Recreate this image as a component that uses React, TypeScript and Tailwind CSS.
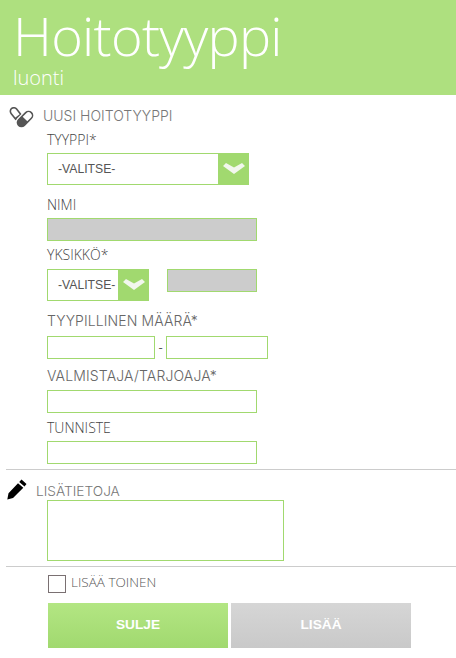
import type { FC, ReactNode } from 'react';

const inputClass = 'block border border-[#a1d96f] h-[23px] bg-white';
const disabledClass = 'block border border-[#a1d96f] h-[23px] bg-[#cccccc]';

const Label: FC<{ children: ReactNode; className?: string }> = ({ children, className = '' }) => (
    <div className={`ml-[47px] h-[20px] text-[14px] leading-[20px] font-light whitespace-nowrap ${className}`}>
        {children}
    </div>
);

const Select: FC<{ width: string }> = ({ width }) => (
    <div className={`flex h-[32px] border border-[#a1d96f] bg-white ${width}`}>
        <span className="flex-1 pl-[10px] text-[12.2px] leading-[30px] text-[#555555] whitespace-nowrap font-['Liberation_Sans',sans-serif]">
            -VALITSE-
        </span>
        <span className="flex w-[31px] shrink-0 -my-px -mr-px items-center justify-center bg-[#a1d96f]">
            <svg width="22" height="12" viewBox="0 0 22 12">
                <path d="M0 3 L3 0 L11 4.5 L19 0 L22 3 L11 11 Z" fill="#f2f7ee" />
            </svg>
        </span>
    </div>
);

const PillsIcon = () => (
    <svg width="26" height="22" viewBox="0 0 26 22" className="ml-[9px] mt-[4px] shrink-0">
        <g transform="rotate(52 7 7)">
            <rect x="0" y="3.5" width="14.5" height="7" rx="3.5" fill="white" stroke="#555555" strokeWidth="1.6" />
            <path d="M9.5 3.5 H11 A3.5 3.5 0 0 1 11 10.5 H9.5 Z" fill="#555555" />
        </g>
        <g transform="rotate(-45 16 12)">
            <rect x="7" y="8" width="18" height="8" rx="4" fill="white" stroke="white" strokeWidth="4" />
            <rect x="7" y="8" width="18" height="8" rx="4" fill="white" stroke="#555555" strokeWidth="1.6" />
            <path d="M16 8 H11 A4 4 0 0 0 11 16 H16 Z" fill="#555555" />
        </g>
    </svg>
);

const PencilIcon = () => (
    <svg width="20" height="21" viewBox="0 0 20 21" className="ml-[7px] shrink-0">
        <path d="M14.5 0.5 L19.5 5 L17.5 7.5 L12.2 3 Z M11 4.2 L16.3 8.8 L6 19 L0.3 20.6 L1.5 14.2 Z" fill="#000000" />
    </svg>
);

const App: FC = () => {
    return (
        <div className="w-[456px] h-[658px] overflow-hidden bg-white font-['Open_Sans',sans-serif]">
            <header className="h-[95px] bg-[#aee07f] pl-[13px] pt-[4px] text-white font-light">
                <h1 className="h-[63px] text-[54px] leading-[62px] tracking-[-0.7px] whitespace-nowrap">Hoitotyyppi</h1>
                <p className="text-[20px] leading-[22px]">luonti</p>
            </header>

            <div className="flex h-[31px] items-center pt-[10px]">
                <PillsIcon />
                <span className="ml-[8px] text-[14px] font-light text-[#777777] whitespace-nowrap font-['Inter',sans-serif]">UUSI HOITOTYYPPI</span>
            </div>

            <Label className="mt-[4px] text-[#444444]">TYYPPI*</Label>
            <div className="ml-[47px] mt-[3px]">
                <Select width="w-[202px]" />
            </div>

            <Label className="mt-[10px] text-[#444444]">NIMI</Label>
            <div className={`${disabledClass} ml-[47px] mt-[3px] w-[210px]`} />

            <Label className="mt-[4px] text-[#444444]">YKSIKKÖ*</Label>
            <div className="ml-[47px] mt-[4px] flex items-start gap-[18px]">
                <Select width="w-[102px]" />
                <div className={`${disabledClass} w-[90px]`} />
            </div>

            <Label className="mt-[10px] text-[#666666] font-['Inter',sans-serif] tracking-[0.1px]">TYYPILLINEN MÄÄRÄ*</Label>
            <div className="ml-[47px] mt-[5px] flex items-center">
                <div className={`${inputClass} w-[108px]`} />
                <span className="w-[11px] text-center text-[13px] text-[#555555]">-</span>
                <div className={`${inputClass} w-[102px]`} />
            </div>

            <Label className="mt-[7px] text-[#666666] font-['Inter',sans-serif] tracking-[0.15px]">VALMISTAJA/TARJOAJA*</Label>
            <div className={`${inputClass} ml-[47px] mt-[4px] w-[210px]`} />

            <Label className="mt-[5px] text-[#444444]">TUNNISTE</Label>
            <div className={`${inputClass} ml-[47px] mt-[3px] w-[210px]`} />

            <hr className="ml-[6px] mt-[5px] border-t border-[#cccccc]" />

            <div className="mt-[9px] flex h-[21px] items-start">
                <PencilIcon />
                <span className="ml-[9px] mt-[2px] text-[13.7px] leading-[20px] font-light text-[#777777] whitespace-nowrap font-['Inter',sans-serif]">LISÄTIETOJA</span>
            </div>
            <div className="ml-[47px] h-[61px] w-[237px] border border-[#a1d96f] bg-white" />

            <hr className="ml-[6px] mt-[5px] border-t border-[#cccccc]" />

            <div className="ml-[48px] mt-[8px] flex h-[18px] items-start">
                <span className="block h-[18px] w-[18px] border border-[#7a7072] bg-white" />
                <span className="ml-[5px] -mt-[3px] text-[13.5px] leading-[20px] font-light text-[#555555] whitespace-nowrap">LISÄÄ TOINEN</span>
            </div>

            <div className="ml-[48px] mt-[10px] flex gap-[3px] font-['Liberation_Sans',sans-serif]">
                <button className="h-[45px] w-[180px] bg-gradient-to-b from-[#b3e683] to-[#a1d96f] text-[13.7px] font-bold text-white">
                    SULJE
                </button>
                <button className="h-[45px] w-[180px] bg-gradient-to-b from-[#d6d6d6] to-[#c9c9c9] text-[13.7px] font-bold text-white">
                    LISÄÄ
                </button>
            </div>
        </div>
    );
};

export default App;
